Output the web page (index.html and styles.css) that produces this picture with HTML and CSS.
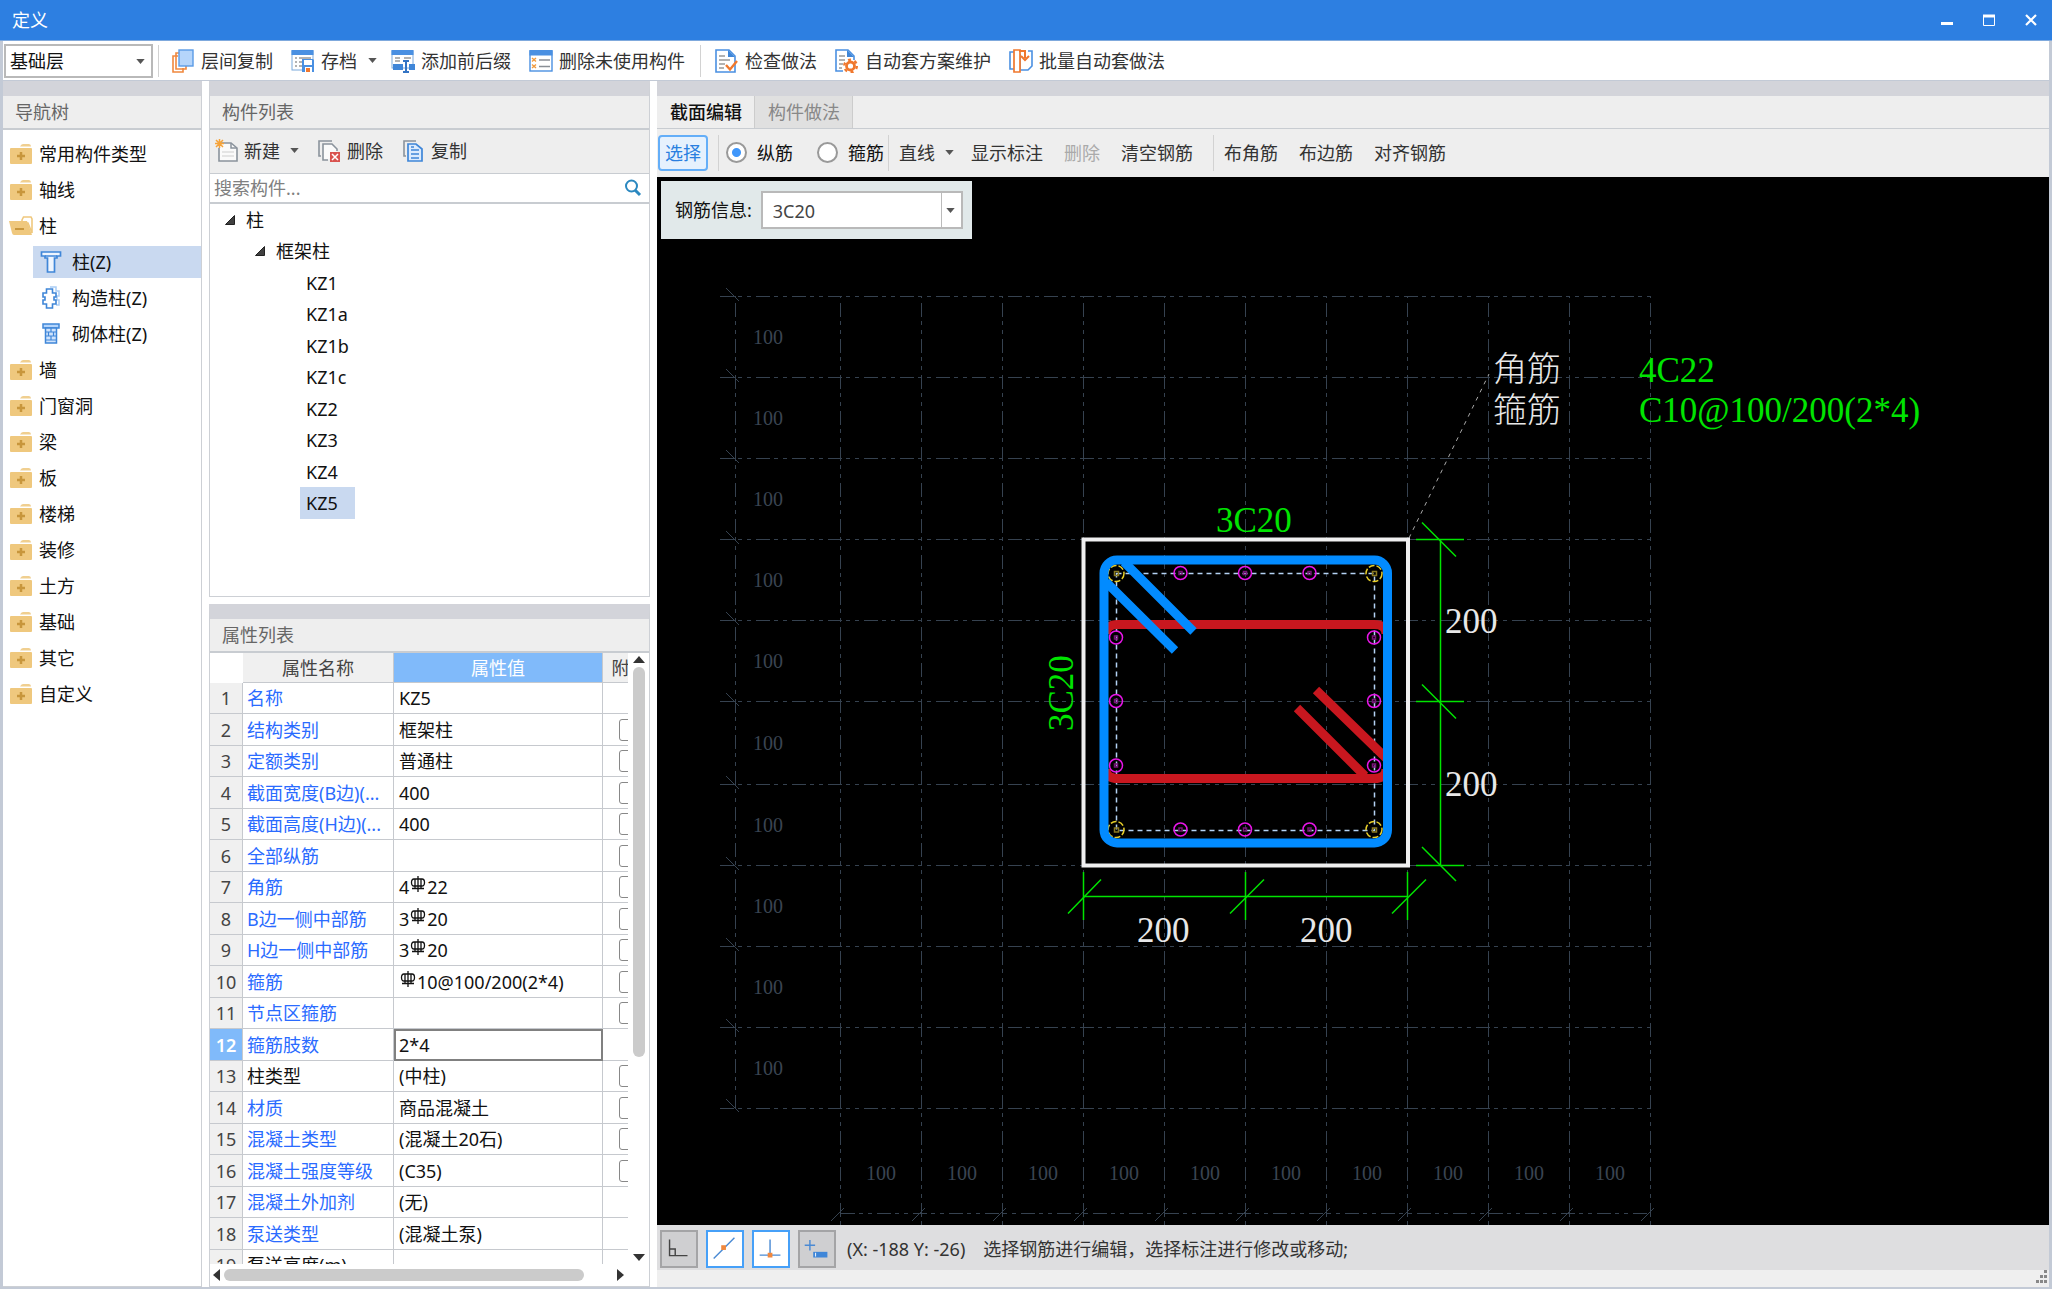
FILE: index.html
```html
<!DOCTYPE html>
<html lang="zh-CN">
<head>
<meta charset="utf-8">
<title>定义</title>
<link rel="stylesheet" href="styles.css">
</head>
<body>
<svg class="defs" aria-hidden="true">
  <symbol id="folder" viewBox="0 0 24 22"><path d="M11 3.500Q12 1 14 1H20Q22 1 22 3.500Z" fill="#f0cf90"/><rect x="1" y="5" width="22" height="16" rx="1" fill="#efc87e"/><path d="M8 13H16M12 9V17" stroke="#c8963c" stroke-width="2.500"/></symbol>
  <symbol id="folder-open" viewBox="0 0 24 22"><path d="M13 5L14.500 2H22L23 4V18L19 8H13Z" fill="#fff" stroke="#efc87e" stroke-width="1.600"/><path d="M0 6H18L23 20H5Q3.500 20 3 18Z" fill="#efc87e"/><path d="M6 14H15" stroke="#c8963c" stroke-width="2"/></symbol>
  <symbol id="caret" viewBox="0 0 10 6"><path d="M0 0H10L5 6Z" fill="#555"/></symbol>
  <symbol id="twisty" viewBox="0 0 10 10"><path d="M9.500 0.500V9.500H0.500Z" fill="#404040" stroke="#222"/></symbol>
  <symbol id="rebar" viewBox="0 0 16 18"><path d="M8 0V16M5 3V13M11 3V13M2 12.500H14" fill="none" stroke="#111" stroke-width="1.300"/><path d="M5 3H4Q1.500 3 1.500 6.500T4 10H12Q14.500 10 14.500 6.500T12 3H5" fill="none" stroke="#111" stroke-width="1.300"/></symbol>
</svg>
<div class="window">
  <header class="titlebar">
    <h1>定义</h1>
    <div class="controls">
      <button aria-label="最小化"><svg width="12" height="12"><path d="M0 9.500H12" stroke="#fff" stroke-width="3"/></svg></button>
      <button aria-label="最大化"><svg width="12" height="12"><path d="M0.500 1V11.500H11.500V1" fill="none" stroke="#fff"/><path d="M0 2H12" stroke="#fff" stroke-width="3"/></svg></button>
      <button aria-label="关闭"><svg width="12" height="12"><path d="M1 1L11 11M11 1L1 11" stroke="#fff" stroke-width="2.200"/></svg></button>
    </div>
  </header>

  <div class="toolbar">
    <div class="combo floor"><select aria-label="楼层"><option>基础层</option></select><svg class="caret"><use href="#caret"/></svg></div>
    <span class="sep"></span>
    <button class="tool"><svg class="icon" viewBox="0 0 24 24"><path d="M7 7H2V23H12V19" fill="none" stroke="#f0883e" stroke-width="1.600"/><path d="M9 4H5V20H15V17" fill="none" stroke="#f0883e" stroke-width="1.600"/><rect x="8" y="1" width="14" height="16" fill="#b5d5fb" stroke="#5a9be6" stroke-width="1.400"/></svg>层间复制</button>
    <button class="tool menu"><svg class="icon" viewBox="0 0 24 24"><rect x="1" y="2" width="21" height="19" fill="#fff" stroke="#7aa9dc"/><rect x="0.500" y="1" width="22" height="5" fill="#4a90e2"/><path d="M4 9H6M8 9H20M4 13H6M8 13H11M4 17H6M8 17H11" stroke="#999" stroke-width="1.500"/><path d="M11 10H22L23 11V23H11Z" fill="#4a90e2"/><rect x="13" y="11" width="8" height="5" fill="#fff"/><rect x="14" y="18" width="7" height="5" fill="#fff"/><rect x="15" y="19" width="4" height="4" fill="#f0782e"/></svg>存档<svg class="caret"><use href="#caret"/></svg></button>
    <button class="tool"><svg class="icon" viewBox="0 0 24 24"><rect x="1" y="2" width="21" height="17" fill="#fff" stroke="#7aa9dc"/><rect x="0.500" y="1" width="22" height="5" fill="#4a90e2"/><path d="M4 9H9M4 12H9M13 9H20" stroke="#999" stroke-width="1.500"/><path d="M2 15H12V21H2ZM18 15H24V21H18Z" fill="#3f86d8"/><path d="M12 12H18M15 12V23M12 23H18" stroke="#3474c4" stroke-width="2" fill="none"/></svg>添加前后缀</button>
    <button class="tool"><svg class="icon" viewBox="0 0 24 24"><rect x="1" y="2" width="22" height="20" fill="#fff" stroke="#4a90e2" stroke-width="1.400"/><rect x="0.500" y="1" width="23" height="5.500" fill="#4a90e2"/><path d="M3 9L7 12.500M7 9L3 12.500M3 15.500L7 19M7 15.500L3 19" stroke="#f09a3e" stroke-width="1.400"/><path d="M10 11H21M10 17.500H21" stroke="#8a8f96" stroke-width="1.600"/></svg>删除未使用构件</button>
    <span class="sep"></span>
    <button class="tool"><svg class="icon" viewBox="0 0 24 24"><path d="M1 1H14L20 7V23H1Z" fill="#fff" stroke="#4a90e2" stroke-width="1.600"/><path d="M13 1L20 8H13Z" fill="#3f86d8"/><path d="M4 7H10M4 11H15M4 15H10M4 19H9" stroke="#999" stroke-width="1.400"/><path d="M11 16L15 20.500L22 12" fill="none" stroke="#f0782e" stroke-width="2.400"/></svg>检查做法</button>
    <button class="tool"><svg class="icon" viewBox="0 0 24 24"><path d="M8 22H1V1H13L19 7V11" fill="#fff" stroke="#4a90e2" stroke-width="1.600"/><path d="M12 1L19 8H12Z" fill="#3f86d8"/><path d="M4 7H10M4 11H10M4 15H8M4 19H7" stroke="#999" stroke-width="1.400"/><circle cx="15.500" cy="17" r="6.300" fill="none" stroke="#f0782e" stroke-width="2.400" stroke-dasharray="3 3.600"/><circle cx="15.500" cy="17" r="4" fill="none" stroke="#f0782e" stroke-width="2.800"/></svg>自动套方案维护</button>
    <button class="tool"><svg class="icon" viewBox="0 0 24 24"><path d="M5 3H1V20H5" fill="none" stroke="#4a90e2" stroke-width="1.600"/><path d="M19 2H23V17L19 21H11V5" fill="#fff" stroke="#4a90e2" stroke-width="1.600"/><path d="M5 1H11V23H5Z" fill="#fff" stroke="#f0782e" stroke-width="1.700"/><path d="M10 2H16V9M12 7L16 11L20 7" fill="none" stroke="#f0782e" stroke-width="2"/></svg>批量自动套做法</button>
  </div>

  <main class="panes">
    <nav class="panel">
      <h2>导航树</h2>
      <ul class="nav">
        <li><svg class="fold"><use href="#folder"/></svg>常用构件类型</li>
        <li><svg class="fold"><use href="#folder"/></svg>轴线</li>
        <li><svg class="fold"><use href="#folder-open"/></svg>柱</li>
        <li class="sub"><a href="#z" class="selected"><svg class="icon" viewBox="0 0 24 24"><path d="M2.500 2H21.500V6H18V8H15.500V22H8.500V8H6V6H2.500Z" fill="#eef5fe" stroke="#3f86d8" stroke-width="1.700"/><path d="M6 6H18" stroke="#3f86d8" stroke-width="1.500"/></svg>柱(Z)</a></li>
        <li class="sub"><a href="#gz"><svg class="icon" viewBox="0 0 24 24"><path d="M11 1H17V5H20V10H18V14H20V19H17" fill="none" stroke="#a9cdf5" stroke-width="1.500"/><path d="M7.500 3H13.500V7H17V11H15V14H17V18H13.500V22H7.500V18H4V14H6V11H4V7H7.500Z" fill="#fff" stroke="#3f86d8" stroke-width="1.600"/></svg>构造柱(Z)</a></li>
        <li class="sub"><a href="#qz"><svg class="icon" viewBox="0 0 24 24"><path d="M4 2H20V6H4Z" fill="#b5d5fb" stroke="#3f86d8" stroke-width="1.500"/><path d="M6.500 6H17.500V21H6.500Z" fill="#cfe3fc" stroke="#3f86d8" stroke-width="1.500"/><path d="M7 10H17M7 14H17M7 18H17M12 6V10M9.500 10V14M14.500 10V14M12 14V18" stroke="#3f86d8" stroke-width="1.200"/></svg>砌体柱(Z)</a></li>
        <li><svg class="fold"><use href="#folder"/></svg>墙</li>
        <li><svg class="fold"><use href="#folder"/></svg>门窗洞</li>
        <li><svg class="fold"><use href="#folder"/></svg>梁</li>
        <li><svg class="fold"><use href="#folder"/></svg>板</li>
        <li><svg class="fold"><use href="#folder"/></svg>楼梯</li>
        <li><svg class="fold"><use href="#folder"/></svg>装修</li>
        <li><svg class="fold"><use href="#folder"/></svg>土方</li>
        <li><svg class="fold"><use href="#folder"/></svg>基础</li>
        <li><svg class="fold"><use href="#folder"/></svg>其它</li>
        <li><svg class="fold"><use href="#folder"/></svg>自定义</li>
      </ul>
    </nav>

    <div class="middle">
      <section class="panel">
        <h2>构件列表</h2>
        <div class="list-tools">
          <button class="tool"><svg class="icon" viewBox="0 0 24 24"><path d="M6 4H16L22 9V22H4V9" fill="#fafafa" stroke="#8a939c" stroke-width="1.600"/><path d="M16 4V9H22" fill="none" stroke="#8a939c" stroke-width="1.500"/><path d="M7 13H19M7 17H19" stroke="#ddd" stroke-width="1.500"/><path d="M1 1L8 8M8 1L1 8M4.500 0V9M0 4.500H9" stroke="#f5a33a" stroke-width="1.500"/></svg>新建<svg class="caret"><use href="#caret"/></svg></button>
          <button class="tool"><svg class="icon" viewBox="0 0 24 24"><path d="M3 17H1V2H14" fill="none" stroke="#8a939c" stroke-width="1.600"/><path d="M10 21H5V5H14L19 10V12" fill="#fafafa" stroke="#8a939c" stroke-width="1.600"/><rect x="12" y="13" width="10" height="10" fill="#d9534f"/><path d="M14 15L20 21M20 15L14 21" stroke="#fff" stroke-width="1.500"/></svg>删除</button>
          <button class="tool"><svg class="icon" viewBox="0 0 24 24"><path d="M4 17H2V2H14" fill="none" stroke="#8a939c" stroke-width="1.600"/><path d="M6 5H14L20 10V22H6Z" fill="#dcebfd" stroke="#3f86d8" stroke-width="1.700"/><path d="M9 11H17M9 15H17M9 19H17M9 8H12" stroke="#3f86d8" stroke-width="1.500"/></svg>复制</button>
        </div>
        <div class="search">
          <input type="search" aria-label="搜索构件" placeholder="搜索构件...">
          <svg width="18" height="18" viewBox="0 0 18 18"><circle cx="7.500" cy="7" r="5.500" fill="none" stroke="#2b88c0" stroke-width="2"/><path d="M11 11L16 16" stroke="#2b88c0" stroke-width="3"/></svg>
        </div>
        <ul class="tree">
          <li><svg class="twisty"><use href="#twisty"/></svg>柱</li>
          <li class="l2"><svg class="twisty"><use href="#twisty"/></svg>框架柱</li>
          <li class="l3"><span>KZ1</span></li>
          <li class="l3"><span>KZ1a</span></li>
          <li class="l3"><span>KZ1b</span></li>
          <li class="l3"><span>KZ1c</span></li>
          <li class="l3"><span>KZ2</span></li>
          <li class="l3"><span>KZ3</span></li>
          <li class="l3"><span>KZ4</span></li>
          <li class="l3"><span class="selected">KZ5</span></li>
        </ul>
      </section>

      <section class="panel props">
        <h2>属性列表</h2>
        <div class="grid-area">
          <div class="grid-clip">
            <table>
              <colgroup><col class="c-num"><col class="c-name"><col class="c-val"><col class="c-add"></colgroup>
              <thead><tr><td></td><th>属性名称</th><th class="active">属性值</th><th>附加</th></tr></thead>
              <tbody>
                <tr><th>1</th><td>名称</td><td>KZ5</td><td></td></tr>
                <tr><th>2</th><td>结构类别</td><td>框架柱</td><td><input type="checkbox" aria-label="附加 结构类别"></td></tr>
                <tr><th>3</th><td>定额类别</td><td>普通柱</td><td><input type="checkbox" aria-label="附加 定额类别"></td></tr>
                <tr><th>4</th><td>截面宽度(B边)(...</td><td>400</td><td><input type="checkbox" aria-label="附加 截面宽度"></td></tr>
                <tr><th>5</th><td>截面高度(H边)(...</td><td>400</td><td><input type="checkbox" aria-label="附加 截面高度"></td></tr>
                <tr><th>6</th><td>全部纵筋</td><td></td><td><input type="checkbox" aria-label="附加 全部纵筋"></td></tr>
                <tr><th>7</th><td>角筋</td><td>4<svg class="rebar"><use href="#rebar"/></svg>22</td><td><input type="checkbox" aria-label="附加 角筋"></td></tr>
                <tr><th>8</th><td>B边一侧中部筋</td><td>3<svg class="rebar"><use href="#rebar"/></svg>20</td><td><input type="checkbox" aria-label="附加 B边一侧中部筋"></td></tr>
                <tr><th>9</th><td>H边一侧中部筋</td><td>3<svg class="rebar"><use href="#rebar"/></svg>20</td><td><input type="checkbox" aria-label="附加 H边一侧中部筋"></td></tr>
                <tr><th>10</th><td>箍筋</td><td><svg class="rebar"><use href="#rebar"/></svg>10@100/200(2*4)</td><td><input type="checkbox" aria-label="附加 箍筋"></td></tr>
                <tr><th>11</th><td>节点区箍筋</td><td></td><td><input type="checkbox" aria-label="附加 节点区箍筋"></td></tr>
                <tr class="current"><th>12</th><td>箍筋肢数</td><td>2*4</td><td></td></tr>
                <tr class="plain"><th>13</th><td>柱类型</td><td>(中柱)</td><td><input type="checkbox" aria-label="附加 柱类型"></td></tr>
                <tr><th>14</th><td>材质</td><td>商品混凝土</td><td><input type="checkbox" aria-label="附加 材质"></td></tr>
                <tr><th>15</th><td>混凝土类型</td><td>(混凝土20石)</td><td><input type="checkbox" aria-label="附加 混凝土类型"></td></tr>
                <tr><th>16</th><td>混凝土强度等级</td><td>(C35)</td><td><input type="checkbox" aria-label="附加 混凝土强度等级"></td></tr>
                <tr><th>17</th><td>混凝土外加剂</td><td>(无)</td><td></td></tr>
                <tr><th>18</th><td>泵送类型</td><td>(混凝土泵)</td><td></td></tr>
                <tr class="plain"><th>19</th><td>泵送高度(m)</td><td></td><td></td></tr>
              </tbody>
            </table>
          </div>
          <div class="vscroll"><svg width="12" height="7"><path d="M0 7L6 0L12 7Z" fill="#333"/></svg><div class="track"><div class="thumb"></div></div><svg width="12" height="7"><path d="M0 0L6 7L12 0Z" fill="#333"/></svg></div>
        </div>
        <div class="hscroll"><svg width="7" height="12"><path d="M7 0L0 6L7 12Z" fill="#333"/></svg><div class="track"><div class="thumb"></div></div><svg width="7" height="12"><path d="M0 0L7 6L0 12Z" fill="#333"/></svg></div>
      </section>
    </div>

    <section class="panel editor">
      <div class="tabs"><button class="on">截面编辑</button><button>构件做法</button></div>
      <div class="draw-tools">
        <button class="pick">选择</button>
        <span class="sep"></span>
        <label><input type="radio" name="bar" checked>纵筋</label>
        <label><input type="radio" name="bar">箍筋</label>
        <span class="sep tight"></span>
        <button class="menu">直线<svg class="caret"><use href="#caret"/></svg></button>
        <button>显示标注</button>
        <button disabled>删除</button>
        <button>清空钢筋</button>
        <span class="sep"></span>
        <button>布角筋</button>
        <button>布边筋</button>
        <button>对齐钢筋</button>
      </div>
      <div class="canvas">
        <svg class="drawing" role="img" aria-label="柱截面">
          <g transform="translate(-657 -177)">
            <g class="grid">
              <path stroke-dasharray="14 4 4 5 4 5" d="M720 296.500H1651M720 377.500H1651M720 458.500H1651M720 539.500H1651M720 620.500H1651M720 701.500H1651M720 784.500H1651M720 865.500H1651M720 946.500H1651M720 1027.500H1651M720 1108.500H1651M841 1213.500H1651"/>
              <path stroke-dasharray="14 4 4 5 4 5" stroke-dashoffset="29" d="M735.500 296V1108M840.500 296V1225M921.500 296V1225M1002.500 296V1225M1083.500 296V1225M1164.500 296V1225M1245.500 296V1225M1326.500 296V1225M1407.500 296V1225M1488.500 296V1225M1569.500 296V1225M1650.500 296V1225"/>
              <path d="M726 288l13 13M726 369l13 13M726 450l13 13M726 531l13 13M726 612l13 13M726 693l13 13M726 776l13 13M726 857l13 13M726 938l13 13M726 1019l13 13M726 1099l13 13"/>
              <path d="M831 1221l13 -13M912 1221l13 -13M993 1221l13 -13M1074 1221l13 -13M1155 1221l13 -13M1236 1221l13 -13M1317 1221l13 -13M1398 1221l13 -13M1479 1221l13 -13M1560 1221l13 -13M1641 1221l13 -13"/>
            </g>
            <g class="grid-label">
              <text x="768" y="344">100</text><text x="768" y="425">100</text><text x="768" y="506">100</text><text x="768" y="587">100</text><text x="768" y="668">100</text><text x="768" y="750">100</text><text x="768" y="832">100</text><text x="768" y="913">100</text><text x="768" y="994">100</text><text x="768" y="1075">100</text>
              <text x="881" y="1180">100</text><text x="962" y="1180">100</text><text x="1043" y="1180">100</text><text x="1124" y="1180">100</text><text x="1205" y="1180">100</text><text x="1286" y="1180">100</text><text x="1367" y="1180">100</text><text x="1448" y="1180">100</text><text x="1529" y="1180">100</text><text x="1610" y="1180">100</text>
            </g>
            <path d="M1409 538L1489 374" stroke="#aaa" stroke-dasharray="4 5"/>
            <rect x="1083.500" y="539.500" width="324.500" height="326" fill="none" stroke="#efeff0" stroke-width="4"/>
            <rect x="1116.500" y="573.500" width="258" height="257" fill="none" stroke="#b4d2f4" stroke-width="1.500" stroke-dasharray="5 4"/>
            <g fill="none" stroke="#c8171f" stroke-width="9">
              <path d="M1106 634Q1106 624.500 1118 624.500H1374Q1386 624.500 1386 634M1106 769Q1106 778.500 1118 778.500H1374Q1386 778.500 1386 769"/>
              <path d="M1316 690L1386 758M1297 708L1365 776"/>
            </g>
            <g class="bar">
              <circle cx="1180.500" cy="573" r="6.500"/><circle cx="1245" cy="573" r="6.500"/><circle cx="1309.500" cy="573" r="6.500"/>
              <circle cx="1180.500" cy="829.500" r="6.500"/><circle cx="1245" cy="829.500" r="6.500"/><circle cx="1309.500" cy="829.500" r="6.500"/>
              <circle cx="1116" cy="637.500" r="6.500"/><circle cx="1116" cy="701" r="6.500"/><circle cx="1116" cy="765.500" r="6.500"/>
              <circle cx="1374" cy="637.500" r="6.500"/><circle cx="1374" cy="701" r="6.500"/><circle cx="1374" cy="765.500" r="6.500"/>
              <path d="M1179 571.500h3v3h-3zM1243.500 571.500h3v3h-3zM1308 571.500h3v3h-3zM1179 828h3v3h-3zM1243.500 828h3v3h-3zM1308 828h3v3h-3zM1114.500 636h3v3h-3zM1114.500 699.500h3v3h-3zM1114.500 764h3v3h-3zM1372.500 636h3v3h-3zM1372.500 699.500h3v3h-3zM1372.500 764h3v3h-3z"/>
            </g>
            <g class="bar corner">
              <circle cx="1116" cy="573.500" r="8"/><circle cx="1374" cy="573.500" r="8"/><circle cx="1116" cy="829.500" r="8"/><circle cx="1374" cy="829.500" r="8"/>
              <path d="M1114.500 571.500h4v4h-4zM1372.500 571.500h4v4h-4zM1114.500 828h4v4h-4zM1372.500 828h4v4h-4z"/>
            </g>
            <g fill="none" stroke="#028bff" stroke-width="9">
              <rect x="1104" y="560" width="283.500" height="283" rx="13"/>
              <path d="M1124 562L1193.500 631.500M1106 582L1175 650.500"/>
            </g>
            <g class="dim">
              <path d="M1440.500 539V865M1416 539.500h48M1416 701.500h48M1416 865.500h48M1083 896.500H1408M1083.500 872v48M1245.500 872v48M1407.500 872v48"/>
              <path d="M1422 522.500l34 34M1422 684.500l34 34M1422 847l34 34M1068 913.500l33 -34M1230 913.500l34 -34M1392 913.500l34 -34"/>
            </g>
            <g class="note green"><text x="1216" y="532">3C20</text><text transform="translate(1073 731) rotate(-90)">3C20</text><text x="1639" y="382">4C22</text><text x="1639" y="422">C10@100/200(2*4)</text></g>
            <g class="note"><text x="1445" y="633">200</text><text x="1445" y="796">200</text><text x="1137" y="942">200</text><text x="1300" y="942">200</text></g>
            <g class="cjk"><text x="1493" y="381">角筋</text><text x="1493" y="422">箍筋</text></g>
          </g>
        </svg>
        <div class="rebar-box">
          <label for="rebar-info">钢筋信息:</label>
          <div class="combo info"><select id="rebar-info"><option>3C20</option></select><span class="drop"><svg class="caret"><use href="#caret"/></svg></span></div>
        </div>
      </div>
      <footer class="status">
        <button aria-label="正交"><svg viewBox="0 0 36 36"><path d="M8 8V25H27M8 18H14V25" fill="none" stroke="#444" stroke-width="1.500"/></svg></button>
        <button aria-label="中点" class="on"><svg viewBox="0 0 36 36"><path d="M6 28L28 6" stroke="#4a8ad4" stroke-width="1.500"/><rect x="14" y="14" width="5" height="5" fill="#f0883e"/></svg></button>
        <button aria-label="垂点" class="on"><svg viewBox="0 0 36 36"><path d="M17 8V23M6 24.500H28" stroke="#4a8ad4" stroke-width="1.500"/><rect x="14.500" y="22" width="5" height="5" fill="#f0883e"/></svg></button>
        <button aria-label="动态输入"><svg viewBox="0 0 36 36"><path d="M5 14H16M10.500 8.500V19.500" stroke="#4a8ad4" stroke-width="1.500"/><rect x="14" y="21" width="15" height="6" fill="#3f86d8"/><path d="M16.500 22V26" stroke="#fff"/></svg></button>
        <p><span>(X: -188 Y: -26)</span><span>选择钢筋进行编辑，选择标注进行修改或移动;</span></p>
      </footer>
      <div class="grip"><svg width="14" height="14"><path d="M9 0h3v3h-3zM5 5h3v3h-3zM9 5h3v3h-3zM1 10h3v3h-3zM5 10h3v3h-3zM9 10h3v3h-3z" fill="#888"/></svg></div>
    </section>
  </main>
</div>
</body>
</html>
```

FILE: styles.css
```css
* { box-sizing: border-box; }
body {
  margin: 0;
  font: 18px/24px "Noto Sans", "Noto Sans CJK SC", sans-serif;
  color: #111;
  background: #fff;
}
button, input, select { font: inherit; color: inherit; }
button { margin: 0; padding: 0; border: 0; background: none; white-space: nowrap; }
ul { list-style: none; margin: 0; padding: 0; }
.defs { position: absolute; width: 0; height: 0; }

.window {
  display: flex;
  flex-direction: column;
  height: 100vh;
}
.titlebar {
  flex: none;
  display: flex;
  align-items: center;
  justify-content: space-between;
  height: 41px;
  padding: 0 15px 0 12px;
  background: #2d7fe1;
  border-bottom: 1px solid #7fa9dd;
  color: #fff;
}
.titlebar h1 { margin: 0; font-size: 18px; font-weight: 400; }
.controls { display: flex; gap: 30px; }
.controls svg { display: block; }

.toolbar {
  flex: none;
  display: flex;
  align-items: center;
  gap: 3px;
  height: 40px;
  padding: 0 5px 0 1px;
  border: solid #c3cad6;
  border-width: 0 3px 1px;
}
.sep { width: 1px; height: 32px; background: #d2d2d2; }
.toolbar .sep { margin: 0 2px; }
.combo { position: relative; background: #fff; border: 2px solid #b9b9b9; }
.combo select {
  display: block;
  width: 100%;
  height: 100%;
  padding: 0 4px;
  border: 0;
  background: none;
  appearance: none;
}
.caret { width: 9px; height: 5px; }
.combo .caret { position: absolute; right: 6px; top: 13px; pointer-events: none; }
.floor { width: 149px; height: 34px; }
.tool {
  display: flex;
  align-items: center;
  gap: 6px;
  padding: 0 8px;
  color: #333;
}
.toolbar .tool { padding-left: 7px; }
.tool .caret { margin-left: 5px; }
.toolbar .menu { padding-right: 4px; }
.toolbar .sep ~ .sep { margin: 0 4px; }
.icon { width: 24px; height: 24px; flex: none; }

.panes {
  flex: 1;
  min-height: 0;
  display: grid;
  grid-template-columns: 199px 441px minmax(0, 1fr);
  gap: 7px;
  border: solid #c3cad6;
  border-width: 0 3px 2px;
}
.panel {
  display: flex;
  flex-direction: column;
  min-height: 0;
  border: solid #cdd0d5;
  border-width: 15px 1px 1px 0;
  border-top-color: #d3d4da;
  background: #fff;
}
.panel h2 {
  flex: none;
  margin: 0;
  height: 34px;
  padding: 0 12px;
  background: #eee;
  border-bottom: 2px solid #c8ccd1;
  font-size: 18px;
  line-height: 32px;
  font-weight: 400;
  color: #666;
}

.nav { padding-top: 6px; }
.nav li { display: flex; align-items: center; gap: 6px; height: 36px; padding-left: 6px; }
.fold { width: 24px; height: 22px; }
.nav .sub { padding-left: 30px; }
.nav a {
  flex: 1;
  display: flex;
  align-items: center;
  gap: 9px;
  height: 32px;
  padding-left: 6px;
  color: inherit;
  text-decoration: none;
}
.selected { background: #c9d9f0; }

.middle { display: grid; grid-template-rows: 516px minmax(0, 1fr); gap: 7px; min-height: 0; }
.middle .panel { border-left-width: 1px; }
.list-tools {
  display: flex;
  align-items: center;
  gap: 7px;
  height: 44px;
  padding-bottom: 2px;
  background: #eee;
  border-bottom: 1px solid #c8ccd1;
}
.list-tools .tool { gap: 5px; padding: 0 7px 0 5px; }
.search {
  display: flex;
  align-items: center;
  height: 30px;
  padding: 0 7px 0 4px;
  border-bottom: 2px solid #c8ccd1;
}
.search input { flex: 1; min-width: 0; padding: 0; border: 0; background: none; outline: 0; }
.search input::placeholder { color: #808080; }
.tree li { display: flex; align-items: center; gap: 11px; height: 31px; padding-left: 15px; }
.tree li:nth-child(even) { height: 32px; }
.tree .l2 { padding-left: 45px; }
.tree .l3 { padding-left: 90px; }
.tree span { align-self: stretch; padding: 0 7px 0 6px; line-height: 32px; }
.tree .selected { padding-right: 17px; }
.twisty { width: 10px; height: 10px; }

.grid-area { flex: 1; min-height: 0; display: flex; justify-content: space-between; }
.grid-clip { width: 418px; overflow: hidden; }
table { table-layout: fixed; width: 447px; border-collapse: separate; border-spacing: 0; }
.c-num { width: 33px; }
.c-name { width: 151px; }
.c-val { width: 209px; }
.c-add { width: 54px; }
thead tr { height: 30px; }
tbody tr { height: 31px; }
tbody tr:nth-child(even) { height: 32px; }
th, td {
  padding: 0 5px;
  border: solid #c6c9ce;
  border-width: 0 1px 1px 0;
  line-height: 24px;
  font-weight: 400;
  text-align: left;
  white-space: nowrap;
}
tbody td:nth-child(2) { padding: 0 4px; color: #2a6bff; }
thead th { background: #f0f0f0; color: #444; text-align: center; padding: 0; }
thead td { border-width: 0; }
thead .active { background: #80bafa; color: #fff; }
tbody th { background: #f0f0f0; color: #444; text-align: center; padding: 0; }
tbody .plain td:nth-child(2) { color: #111; }
tbody td:last-child { padding: 0; }
tbody .current th { background: #80bafa; color: #fff; font-weight: 600; }
.current td:nth-child(3) { border-color: transparent; outline: 2px solid #808080; outline-offset: -2px; }
td input {
  display: block;
  width: 22px;
  height: 22px;
  margin: 0 auto;
  appearance: none;
  border: 1px solid #888;
  border-radius: 3px;
  background: #fff;
}
.rebar { width: 16px; height: 18px; margin: 0 1px; }
.vscroll { display: flex; flex-direction: column; align-items: center; gap: 4px; width: 21px; padding: 3px 0; }
.track { flex: 1; display: flex; }
.thumb { background: #cbcbcb; border-radius: 6px; }
.vscroll .thumb { width: 12px; height: 390px; }
.hscroll { flex: none; display: flex; align-items: center; gap: 4px; height: 22px; padding: 0 25px 0 3px; }
.hscroll .thumb { width: 360px; height: 12px; }

.editor { border-width: 15px 0 0; }
.tabs { flex: none; display: flex; height: 33px; background: #eee; border-bottom: 1px solid #c8ccd1; }
.tabs button { padding: 0 12px 0 13px; background: #e0e0e0; color: #888; border-right: 1px solid #ccc; }
.tabs .on { background: #eee; color: #111; font-weight: 500; }
.draw-tools { flex: none; display: flex; align-items: center; height: 48px; background: #eee; padding: 0 0 1px 1px; }
.draw-tools button { padding: 0 10px; color: #333; }
.draw-tools .pick {
  height: 36px;
  padding: 0 5px;
  border: 2px solid #64aef8;
  border-radius: 4px;
  background: #e6f1fd;
  color: #2a7fe0;
}
.draw-tools button + button { padding: 0 10px 0 11px; }
.draw-tools button:disabled { color: #aaa; }
.draw-tools .menu { display: flex; align-items: center; gap: 10px; padding-right: 6px; }
.draw-tools .sep { height: 36px; margin: 0 0 0 10px; }
.draw-tools .tight { margin: 0; }
.draw-tools label { display: flex; align-items: center; gap: 10px; margin-left: 7px; }
.draw-tools label + label { margin: 0 4px 0 24px; }
.draw-tools input {
  appearance: none;
  width: 21px;
  height: 21px;
  margin: 0;
  border: 2px solid #999;
  border-radius: 50%;
  background: #fff;
}
.draw-tools input:checked { background: radial-gradient(circle, #4097fb 4px, #fff 5px); }

.canvas { position: relative; flex: 1; min-height: 0; background: #000; overflow: hidden; }
.drawing { display: block; width: 100%; height: 100%; }
.grid { fill: none; stroke: #364250; }
.grid-label { fill: #3a4452; font: 20px "Liberation Serif", serif; text-anchor: middle; }
.note { fill: #e8e8e8; font: 35px "Liberation Serif", serif; }
.green { fill: #00e400; }
.cjk { fill: #e8e8e8; font: 300 34px "Noto Sans CJK SC", sans-serif; }
.dim { fill: none; stroke: #00e400; stroke-width: 1.500; }
.bar { fill: none; stroke: #e815e8; stroke-width: 1.500; }
.bar path { stroke: #7a127a; }
.corner { stroke: #e8cf2a; stroke-dasharray: 6 2; }
.corner path { stroke: #8a7a20; stroke-dasharray: none; }
.rebar-box {
  position: absolute;
  left: 4px;
  top: 4px;
  display: flex;
  align-items: center;
  gap: 9px;
  height: 58px;
  padding: 0 9px 0 14px;
  background: #e1e9ea;
}
.info { width: 202px; height: 38px; }
.info select { padding: 2px 10px 0; color: #444; }
.drop { position: absolute; right: 0; top: 0; bottom: 0; width: 20px; border-left: 1px solid #bbb; pointer-events: none; }
.info .caret { top: 15px; }

.status { flex: none; display: flex; align-items: center; gap: 8px; height: 45px; padding: 2px 0 0 3px; background: #dedee0; color: #333; }
.status p { display: flex; gap: 18px; margin: 0 0 0 3px; }
.status button { width: 38px; height: 38px; border: 2px solid #a4a4a6; background: #cfcfd1; }
.status button svg { display: block; width: 34px; height: 34px; }
.status .on { border-color: #46a0f8; background: #fff; }
.grip { flex: none; display: flex; justify-content: flex-end; height: 17px; background: #efefef; }
```
